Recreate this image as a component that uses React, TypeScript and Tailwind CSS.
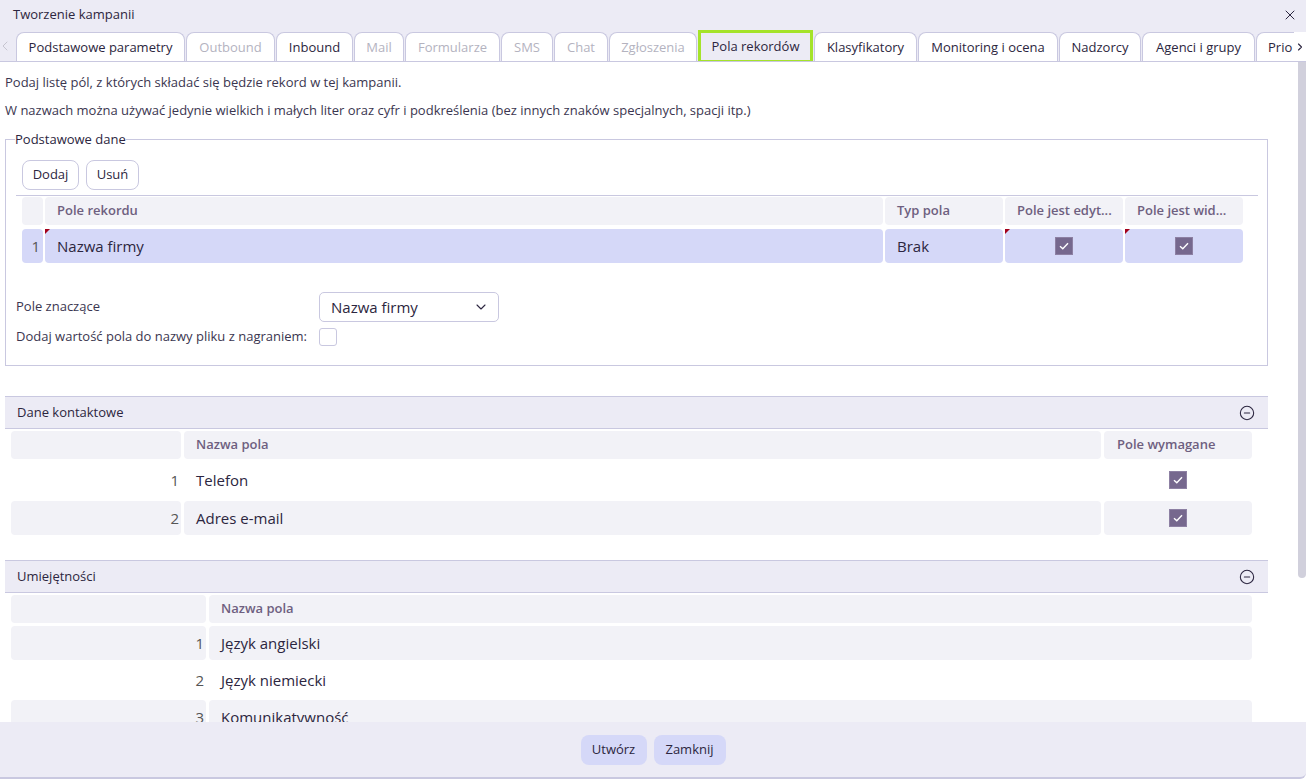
import { X, ChevronDown, ChevronLeft, ChevronRight, CircleMinus } from 'lucide-react'

const tabs = [
  { label: 'Podstawowe parametry', w: 'w-[169px]', state: 'on' },
  { label: 'Outbound', w: 'w-[89px]', state: 'off' },
  { label: 'Inbound', w: 'w-[77px]', state: 'on' },
  { label: 'Mail', w: 'w-[50px]', state: 'off' },
  { label: 'Formularze', w: 'w-[95px]', state: 'off' },
  { label: 'SMS', w: 'w-[52px]', state: 'off' },
  { label: 'Chat', w: 'w-[54px]', state: 'off' },
  { label: 'Zgłoszenia', w: 'w-[88px]', state: 'off' },
  { label: 'Pola rekordów', w: 'w-[115px]', state: 'active' },
  { label: 'Klasyfikatory', w: 'w-[103px]', state: 'on' },
  { label: 'Monitoring i ocena', w: 'w-[140px]', state: 'on' },
  { label: 'Nadzorcy', w: 'w-[82px]', state: 'on' },
  { label: 'Agenci i grupy', w: 'w-[113px]', state: 'on' },
]

function Mark() {
  return (
    <span className="absolute top-0 left-0 w-0 h-0 border-t-[5px] border-t-[#a3001b] border-r-[5px] border-r-transparent" />
  )
}

function Check() {
  return (
    <span className="inline-flex items-center justify-center w-[18px] h-[18px] bg-[#76688e] border border-[#8d80a3]">
      <svg width="10" height="8" viewBox="0 0 10 8" fill="none">
        <path d="M1 4.2 L3.8 6.8 L9 1.2" stroke="white" strokeWidth="1.4" />
      </svg>
    </span>
  )
}

function SectionHeader({ title }: { title: string }) {
  return (
    <div className="ml-[5px] w-[1263px] h-[33px] bg-[#ecebf5] border-y border-[#c9c8e0] flex items-center justify-between pl-[12px] pr-[13px]">
      <span className="text-[13px] font-medium text-[#2c2640]">{title}</span>
      <CircleMinus size={16} strokeWidth={1.6} className="text-[#2c2640]" />
    </div>
  )
}

export default function App() {
  const skills = ['Język angielski', 'Język niemiecki', 'Komunikatywność']

  return (
    <div className="w-[1306px] h-[779px] flex flex-col bg-white text-[#2c2640] font-['Open_Sans',sans-serif] overflow-hidden">
      {/* nagłówek okna */}
      <div className="h-[30px] bg-[#ecebf5] flex items-center justify-between pl-[13px] pr-[8px] shrink-0">
        <span className="text-[13px] font-medium">Tworzenie kampanii</span>
        <X size={16} strokeWidth={1.5} className="text-[#2c2640]" />
      </div>

      {/* zakładki */}
      <div className="h-[32px] bg-[#ecebf5] border-b border-[#c9c8e0] flex items-end shrink-0 overflow-hidden">
        <div className="w-[16px] h-full flex items-center justify-start shrink-0">
          <ChevronLeft size={16} strokeWidth={1.4} className="text-[#c3c2cc] -ml-[3px]" />
        </div>
        <div className="flex-1 flex items-end gap-[1px] h-full overflow-hidden">
          {tabs.map((t) =>
            t.state === 'active' ? (
              <div
                key={t.label}
                className={`${t.w} h-[33px] -mb-[2px] shrink-0 flex items-center justify-center border-[3px] border-[#a5e32a] bg-[#ecebf5] text-[13px] font-medium text-[#2c2640]`}
              >
                {t.label}
              </div>
            ) : (
              <div
                key={t.label}
                className={`${t.w} h-[30px] -mb-px shrink-0 flex items-center justify-center bg-white border border-[#c9c8e0] border-b-0 rounded-t-[8px] text-[13px] font-medium whitespace-nowrap ${
                  t.state === 'off' ? 'text-[#b4b3bf]' : 'text-[#2c2640]'
                }`}
              >
                {t.label}
              </div>
            )
          )}
          <div className="flex-1 h-[30px] -mb-px flex items-center pl-[11px] bg-white border border-[#c9c8e0] border-b-0 border-r-0 rounded-tl-[8px] text-[13px] font-medium whitespace-nowrap">
            Prio
          </div>
        </div>
        <div className="w-[12px] h-[30px] -mb-px shrink-0 bg-white flex items-center justify-center">
          <ChevronRight size={14} strokeWidth={2.2} className="text-[#2c2640]" />
        </div>
      </div>

      {/* treść */}
      <div className="flex-1 flex overflow-hidden">
        <div className="flex-1 overflow-hidden text-[13px]">
          <p className="pl-[5px] pt-[11px] leading-[18px] text-[#3b3650]">
            Podaj listę pól, z których składać się będzie rekord w tej kampanii.
          </p>
          <p className="pl-[5px] pt-[10px] leading-[18px] text-[#3b3650]">
            W nazwach można używać jedynie wielkich i małych liter oraz cyfr i podkreślenia (bez innych znaków specjalnych, spacji itp.)
          </p>

          <fieldset className="ml-[5px] mt-[12px] w-[1263px] h-[235px] border border-[#c9c8e0] pl-[10px] pr-[9px]">
            <legend className="ml-[-1px] text-[13px] font-medium leading-[16px] text-[#2c2640]">Podstawowe dane</legend>
            <div className="flex gap-[7px] pl-[6px] pt-[13px]">
              <button className="w-[57px] h-[30px] rounded-[8px] border border-[#c9c8e0] bg-white text-[13px] font-medium">Dodaj</button>
              <button className="w-[53px] h-[30px] rounded-[8px] border border-[#c9c8e0] bg-white text-[13px] font-medium">Usuń</button>
            </div>
            <div className="mt-[5px] border-t border-[#c9c8e0] pl-[6px] pt-[1px]">
              <div className="flex gap-[2px] h-[28px] text-[13px] font-semibold text-[#6e5f80]">
                <div className="w-[21px] bg-[#f2f2f7] rounded-[4px]" />
                <div className="w-[838px] bg-[#f2f2f7] rounded-[4px] flex items-center pl-[12px]">Pole rekordu</div>
                <div className="w-[118px] bg-[#f2f2f7] rounded-[4px] flex items-center pl-[12px]">Typ pola</div>
                <div className="w-[118px] bg-[#f2f2f7] rounded-[4px] flex items-center pl-[12px] whitespace-nowrap">Pole jest edyt...</div>
                <div className="w-[118px] bg-[#f2f2f7] rounded-[4px] flex items-center pl-[12px] whitespace-nowrap">Pole jest wid...</div>
              </div>
              <div className="flex gap-[2px] h-[34px] mt-[4px] text-[15px]">
                <div className="w-[21px] bg-[#d5d8f8] rounded-[4px] flex items-center justify-end pr-[3px] text-[#555]">1</div>
                <div className="relative w-[838px] bg-[#d5d8f8] rounded-[4px] flex items-center pl-[12px]">
                  <Mark />
                  Nazwa firmy
                </div>
                <div className="w-[118px] bg-[#d5d8f8] rounded-[4px] flex items-center pl-[12px]">Brak</div>
                <div className="relative w-[118px] bg-[#d5d8f8] rounded-[4px] flex items-center justify-center">
                  <Mark />
                  <Check />
                </div>
                <div className="relative w-[118px] bg-[#d5d8f8] rounded-[4px] flex items-center justify-center">
                  <Mark />
                  <Check />
                </div>
              </div>
            </div>

            <div className="mt-[29px] flex items-center h-[30px]">
              <span className="w-[303px] text-[13px] text-[#3b3650]">Pole znaczące</span>
              <div className="w-[180px] h-[30px] border border-[#c9c8e0] rounded-[5px] flex items-center justify-between pl-[11px] pr-[9px] text-[15px]">
                Nazwa firmy
                <ChevronDown size={16} strokeWidth={1.6} className="text-[#2c2640]" />
              </div>
            </div>
            <div className="mt-[5px] flex items-center h-[19px]">
              <span className="w-[303px] text-[13px] text-[#3b3650]">Dodaj wartość pola do nazwy pliku z nagraniem:</span>
              <span className="w-[18px] h-[18px] border border-[#c9c8e0] rounded-[3px] bg-white" />
            </div>
          </fieldset>

          {/* Dane kontaktowe */}
          <div className="mt-[30px]">
            <SectionHeader title="Dane kontaktowe" />
            <div className="pl-[11px] pt-[2px]">
              <div className="flex gap-[3px] h-[28px] text-[13px] font-semibold text-[#6e5f80]">
                <div className="w-[170px] bg-[#f2f2f7] rounded-[4px]" />
                <div className="w-[917px] bg-[#f2f2f7] rounded-[4px] flex items-center pl-[12px]">Nazwa pola</div>
                <div className="w-[148px] bg-[#f2f2f7] rounded-[4px] flex items-center pl-[13px]">Pole wymagane</div>
              </div>
              {['Telefon', 'Adres e-mail'].map((name, i) => (
                <div key={name} className="flex gap-[3px] h-[34px] mt-[4px] text-[15px]">
                  <div className={`w-[170px] rounded-[4px] flex items-center justify-end pr-[2px] text-[#555] ${i % 2 ? 'bg-[#f2f2f7]' : 'bg-white'}`}>{i + 1}</div>
                  <div className={`w-[917px] rounded-[4px] flex items-center pl-[12px] ${i % 2 ? 'bg-[#f2f2f7]' : 'bg-white'}`}>{name}</div>
                  <div className={`w-[148px] rounded-[4px] flex items-center justify-center ${i % 2 ? 'bg-[#f2f2f7]' : 'bg-white'}`}>
                    <Check />
                  </div>
                </div>
              ))}
            </div>
          </div>

          {/* Umiejętności */}
          <div className="mt-[25px]">
            <SectionHeader title="Umiejętności" />
            <div className="pl-[11px] pt-[2px]">
              <div className="flex gap-[3px] h-[28px] text-[13px] font-semibold text-[#6e5f80]">
                <div className="w-[195px] bg-[#f2f2f7] rounded-[4px]" />
                <div className="w-[1043px] bg-[#f2f2f7] rounded-[4px] flex items-center pl-[12px]">Nazwa pola</div>
              </div>
              {skills.map((name, i) => (
                <div key={name} className="flex gap-[3px] h-[34px] mt-[3px] text-[15px]">
                  <div className={`w-[195px] rounded-[4px] flex items-center justify-end pr-[2px] text-[#555] ${i % 2 ? 'bg-white' : 'bg-[#f2f2f7]'}`}>{i + 1}</div>
                  <div className={`w-[1043px] rounded-[4px] flex items-center pl-[12px] ${i % 2 ? 'bg-white' : 'bg-[#f2f2f7]'}`}>{name}</div>
                </div>
              ))}
            </div>
          </div>
        </div>

        {/* pasek przewijania */}
        <div className="w-[8px] shrink-0 bg-white">
          <div className="h-[516px] bg-[#d1d0dc] rounded-b-[4px]" />
        </div>
      </div>

      {/* stopka */}
      <div className="h-[57px] shrink-0 bg-[#ecebf5] border-b-2 border-[#c9c8e0] rounded-br-[6px] flex items-center justify-center gap-[7px]">
        <button className="w-[66px] h-[30px] rounded-[8px] bg-[#d5d8f8] text-[13px] font-medium">Utwórz</button>
        <button className="w-[72px] h-[30px] rounded-[8px] bg-[#d5d8f8] text-[13px] font-medium">Zamknij</button>
      </div>
    </div>
  )
}
